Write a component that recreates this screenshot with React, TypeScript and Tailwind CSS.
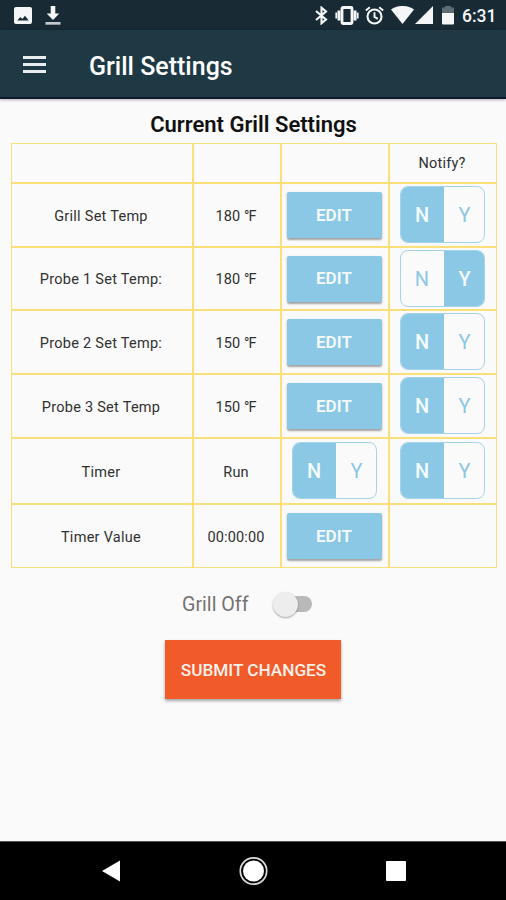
import { useState } from "react";
import clsx from "clsx";

type Choice = "N" | "Y";

interface Row {
  label: string;
  value: string;
  degrees?: boolean;
  height: string;
  run?: Choice;
  notify?: Choice;
}

const ROWS: Row[] = [
  { label: "Grill Set Temp", value: "180", degrees: true, height: "h-[64px]", notify: "N" },
  { label: "Probe 1 Set Temp:", value: "180", degrees: true, height: "h-[63px]", notify: "Y" },
  { label: "Probe 2 Set Temp:", value: "150", degrees: true, height: "h-[64px]", notify: "N" },
  { label: "Probe 3 Set Temp", value: "150", degrees: true, height: "h-[64px]", notify: "N" },
  { label: "Timer", value: "Run", height: "h-[66px]", run: "N", notify: "N" },
  { label: "Timer Value", value: "00:00:00", height: "h-[64px]" },
];

const GRID = "grid grid-cols-[182px_88px_108px_108px]";
const CELL = "flex items-center justify-center border border-[#fbe07a] pr-[2px]";

function StatusBar() {
  return (
    <div className="flex h-[30px] items-center bg-[#182a34] text-[#f4f6f7]">
      <svg className="ml-[14px] h-[17px] w-[18px]" viewBox="0 0 18 17">
        <path fill="currentColor" fillRule="evenodd" d="M2 0h14a2 2 0 0 1 2 2v13a2 2 0 0 1-2 2H2a2 2 0 0 1-2-2V2a2 2 0 0 1 2-2zm1.300 13.500h11.400L11 8.700l-2.700 3.400-2-2.200z" />
      </svg>
      <svg className="ml-[13px] h-[20px] w-[16px]" viewBox="0 0 16 20">
        <path fill="currentColor" d="M5.700 1h4.600v7.500h4L8 15 1.700 8.500h4z" />
        <path fill="#c3c9cc" d="M.5 17h15v2.700H.5z" />
      </svg>
      <div className="ml-auto flex items-center pr-[9px]">
        <svg className="h-[19px] w-[13px] translate-x-[1px]" viewBox="0 0 13 19" fill="none" stroke="currentColor" strokeWidth="2.100">
          <path d="M1 5l10 8.500-4.500 3.800V1.700L11 5.500 1 14" />
        </svg>
        <svg className="ml-[8px] h-[19px] w-[24px]" viewBox="0 0 24 19" fill="none" stroke="currentColor">
          <rect x="7" y="1.500" width="10" height="16" rx="1" strokeWidth="2.800" />
          <path d="M4 4.500v10M20 4.500v10" strokeWidth="3" />
          <path d="M1.300 6.500v6M22.700 6.500v6" strokeWidth="1.800" />
        </svg>
        <svg className="ml-[6px] h-[19px] w-[19px]" viewBox="0 0 19 19" fill="none" stroke="currentColor" strokeWidth="2.100">
          <circle cx="9.500" cy="10.500" r="7" />
          <path d="M.8 4.500l4-3.300M18.200 4.500l-4-3.300M9.500 6.300v4.600l3.300 2" strokeWidth="1.900" />
        </svg>
        <svg className="ml-[7px] h-[18px] w-[23px]" viewBox="0 0 23 18">
          <path fill="currentColor" d="M0 3.500C6.500-1.200 16.500-1.200 23 3.500L11.500 18z" />
        </svg>
        <svg className="ml-[1px] h-[18px] w-[18px]" viewBox="0 0 18 18">
          <path fill="currentColor" d="M18 0v18H0z" />
        </svg>
        <svg className="ml-[9px] h-[19px] w-[12px]" viewBox="0 0 12 19">
          <path fill="#5c6c73" d="M3 0h6v1.500h3V7H0V1.500h3z" />
          <path fill="currentColor" d="M0 7h12v10.500a1 1 0 0 1-1 1H1a1 1 0 0 1-1-1z" />
        </svg>
        <span className="ml-[8px] w-[35px] translate-y-[1px] whitespace-nowrap text-[17.500px] font-medium leading-[20px]">6:31</span>
      </div>
    </div>
  );
}

function EditButton() {
  return (
    <button className="h-[46px] w-[95px] rounded-[2px] bg-[#8ac8e5] pt-[1px] text-[17px] font-semibold tracking-[0.100px] text-[#f5fbfe] shadow-[0_1.500px_2px_rgba(0,0,0,0.35)]">
      EDIT
    </button>
  );
}

function Toggle({ initial }: { initial: Choice }) {
  const [value, setValue] = useState<Choice>(initial);

  return (
    <div className="-mt-[1px] flex h-[57px] w-[85px] overflow-hidden rounded-[8px] border border-[#a5d4ea] text-[20px]">
      {(["N", "Y"] as const).map((c) => (
        <button
          key={c}
          onClick={() => setValue(c)}
          className={clsx(
            "pt-[1px]",
            c === "N" ? "w-[43px]" : "w-[40px] pl-[2px]",
            value === c ? "bg-[#8ac8e5] font-medium text-[#f5fbfe]" : "text-[#8ac8e5]"
          )}
        >
          {c}
        </button>
      ))}
    </div>
  );
}

function SettingsTable() {
  return (
    <div className="ml-[11px] w-[486px] text-[14.500px] text-[#303030]">
      <div className={clsx(GRID, "h-[40px]")}>
        <div className={CELL} />
        <div className={CELL} />
        <div className={CELL} />
        <div className={clsx(CELL, "pt-[2px] tracking-[0.200px]")}>Notify?</div>
      </div>
      {ROWS.map((row) => (
        <div key={row.label} className={clsx(GRID, row.height)}>
          <div className={clsx(CELL, "pt-[3px] tracking-[0.270px]")}>{row.label}</div>
          <div className={clsx(CELL, "whitespace-pre pt-[3px] tracking-[0.150px]")}>
            {row.value}
            {row.degrees && (
              <>
                {" "}
                <span className="tracking-[-1px]">°</span>F
              </>
            )}
          </div>
          <div className={CELL}>{row.run ? <Toggle initial={row.run} /> : <EditButton />}</div>
          <div className={CELL}>{row.notify && <Toggle initial={row.notify} />}</div>
        </div>
      ))}
    </div>
  );
}

export default function App() {
  const [on, setOn] = useState(false);

  return (
    <main className="flex h-[900px] w-[506px] flex-col overflow-hidden bg-[#fafafa] font-['Roboto',sans-serif]">
      <StatusBar />
      <header className="flex h-[69px] items-center border-b-2 border-[#0d1a2b] bg-[#1f3944] pt-[2px] text-white shadow-[0_1px_3px_rgba(0,0,0,0.3)]">
        <button className="ml-[23px] flex w-[23px] flex-col gap-[4px]">
          <span className="h-[3px] w-full bg-[#e9edef]" />
          <span className="h-[3px] w-full bg-[#e9edef]" />
          <span className="h-[3px] w-full bg-[#e9edef]" />
        </button>
        <h1 className="ml-[43px] mt-[4px] text-[25px] font-medium">Grill Settings</h1>
      </header>

      <h2 className="mt-[10px] h-[34px] pl-[1px] text-center text-[22px] font-semibold leading-[32px] text-[#111111]">
        Current Grill Settings
      </h2>
      <SettingsTable />

      <div className="mt-[22px] flex h-[28px] items-center pl-[182px]">
        <span className="w-[90px] pt-[1px] text-[19.700px] text-[#737373]">Grill Off</span>
        <button
          onClick={() => setOn(!on)}
          className="flex h-[16px] w-[36px] translate-x-[4px] items-center rounded-full bg-[#b9b9b9]"
        >
          <span
            className={clsx(
              "size-[25px] shrink-0 rounded-full bg-[#ededed] shadow-[0_1px_2px_rgba(0,0,0,0.35)]",
              on ? "translate-x-[14px]" : "-translate-x-[3px]"
            )}
          />
        </button>
      </div>

      <button className="ml-[165px] mt-[22px] h-[59px] w-[176px] bg-[#f15a29] pl-[1px] pt-[3px] text-[17.200px] font-medium text-[#fff1ec] shadow-[0_2px_3px_rgba(0,0,0,0.35)]">
        SUBMIT CHANGES
      </button>

      <nav className="mt-auto flex h-[59px] items-center border-t border-[#555555] bg-black">
        <svg className="ml-[102px] h-[22px] w-[19px]" viewBox="0 0 19 22">
          <path fill="#fff" d="M18 .5v21L0 11z" />
        </svg>
        <svg className="ml-[118px] h-[30px] w-[30px]" viewBox="0 0 30 30">
          <circle cx="14.500" cy="15" r="13.200" fill="none" stroke="#dddddd" strokeWidth="1.700" />
          <circle cx="14.500" cy="15" r="10.500" fill="#fff" />
        </svg>
        <span className="ml-[117px] size-[20px] rounded-[1px] bg-white" />
      </nav>
    </main>
  );
}
